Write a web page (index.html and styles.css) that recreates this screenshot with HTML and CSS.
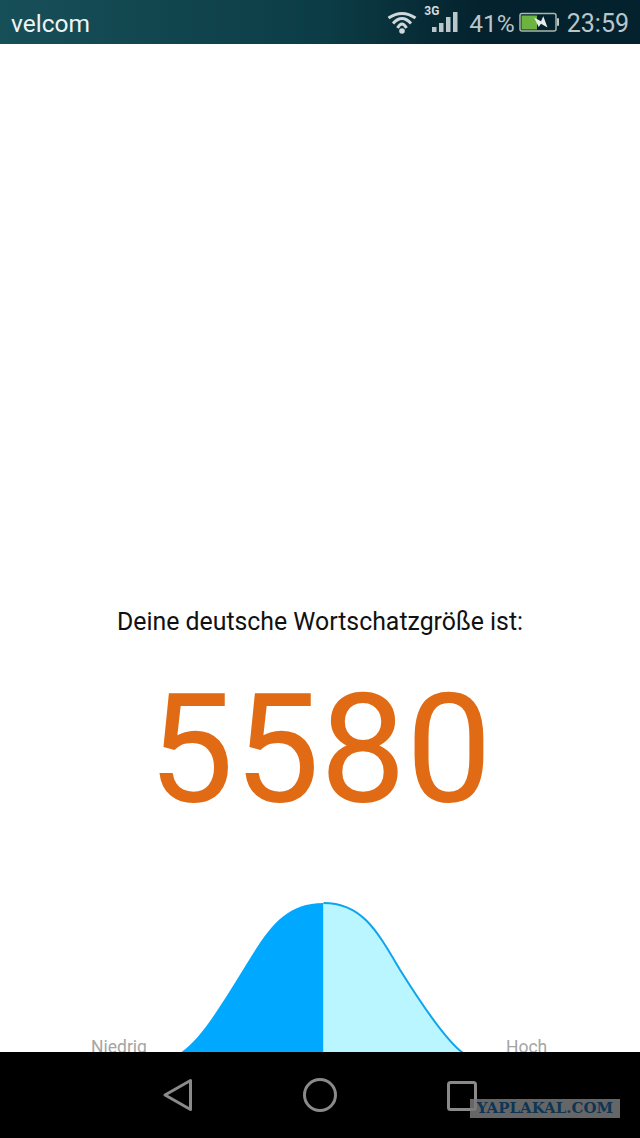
FILE: index.html
```html
<!DOCTYPE html>
<html lang="en">
<head>
    <meta charset="UTF-8">
    <meta name="viewport" content="width=device-width, initial-scale=1.0">
    <title>Wortschatz</title>
    <link rel="stylesheet" href="styles.css">
</head>
<body>
    <div class="phone">
        <div class="status-bar">
            <span class="carrier">velcom</span>
            <div class="status-icons">
                <svg class="wifi" width="30" height="24" viewBox="0 0 30 24">
                    <path d="M1.5 8Q15 -1 28.5 8" />
                    <path d="M6 13.5Q15 3.5 24 13.5" />
                    <path d="M10.5 18Q15 10 19.5 18" />
                    <circle cx="15" cy="21" r="2.8" />
                </svg>
                <div class="signal">
                    <span class="net-type">3G</span>
                    <svg width="27" height="24" viewBox="0 0 27 24">
                        <rect x="0" y="17" width="4.5" height="5" />
                        <rect x="7" y="13" width="4.5" height="9" />
                        <rect x="14" y="7" width="4.5" height="15" />
                        <rect x="21" y="2" width="4.5" height="20" />
                    </svg>
                </div>
                <span class="percent">41%</span>
                <svg class="battery" width="40" height="20" viewBox="0 0 40 20">
                    <rect class="battery-shell" x="1" y="1.5" width="36" height="17.5" rx="2" />
                    <rect class="battery-cap" x="38" y="6" width="2" height="8" rx="1" />
                    <rect class="battery-level" x="2.5" y="3.5" width="15.5" height="14" />
                    <path class="battery-bolt" d="M15 5.5L22 9.3L24.3 4.3L28.5 15.5L22 11.7L19.7 15Z" />
                </svg>
                <span class="clock">23:59</span>
            </div>
        </div>

        <main class="content">
            <p class="result-label">Deine deutsche Wortschatzgröße ist:</p>
            <p class="result-number">5580</p>
            <div class="chart">
                <span class="chart-label chart-label-low">Niedrig</span>
                <svg class="curve" width="300" height="152" viewBox="0 0 300 152">
                    <path class="curve-low" d="M3 153C24 140 46.5 101 66.5 69C90.5 30 106.5 3 146.5 3V153Z" />
                    <path class="curve-high" d="M146.5 3C184.5 3 199.5 30 222.5 69C242.5 101 268 140 286 153H146.5Z" />
                    <path class="curve-line" d="M146.5 3C184.5 3 199.5 30 222.5 69C242.5 101 268 140 286 153" />
                </svg>
                <span class="chart-label chart-label-high">Hoch</span>
            </div>
        </main>

        <div class="nav-bar">
            <svg width="32" height="34" viewBox="0 0 32 34">
                <path d="M29.5 2.5V31.5L4 17Z" />
            </svg>
            <svg width="34" height="34" viewBox="0 0 34 34">
                <circle cx="17" cy="17" r="15.5" />
            </svg>
            <svg width="32" height="32" viewBox="0 0 32 32">
                <rect x="1.5" y="3.5" width="27" height="27" rx="2" />
            </svg>
            <span class="watermark">YAPLAKAL.COM</span>
        </div>
    </div>
</body>
</html>
```

FILE: styles.css
```css
body {
    margin: 0;
    padding: 0;
    font-family: 'Roboto', sans-serif;
    background: #fff;
}

.phone {
    display: flex;
    flex-direction: column;
    width: 640px;
    height: 1138px;
    overflow: hidden;
}

.status-bar {
    flex: 0 0 44px;
    display: flex;
    align-items: center;
    justify-content: space-between;
    padding: 0 11px;
    box-sizing: border-box;
    background: linear-gradient(90deg, #174f58 0%, #0c3d46 50%, #04222e 75%, #04222e 100%);
    color: #b9c6ca;
}

.carrier {
    padding-top: 3px;
    font-size: 24.5px;
    color: #eef4f4;
}

.status-icons {
    display: flex;
    align-items: center;
}

.wifi {
    margin-right: 15px;
}

.wifi path {
    fill: none;
    stroke: #cfd8da;
    stroke-width: 3;
}

.wifi circle {
    fill: #cfd8da;
}

.signal {
    position: relative;
    display: flex;
    margin-right: 10px;
}

.signal svg {
    fill: #b9c6ca;
}

.net-type {
    position: absolute;
    left: -8px;
    top: -4px;
    font-size: 12px;
    line-height: 11px;
    font-weight: 700;
    color: #d5dcde;
}

.percent {
    padding-top: 2px;
    font-size: 24.5px;
    margin-right: 4px;
}

.battery {
    margin-right: 8px;
}

.battery-shell {
    fill: #04222e;
    stroke: #a9b8a8;
    stroke-width: 1.5;
}

.battery-cap {
    fill: #b9c6ca;
}

.battery-level {
    fill: #6cb33f;
}

.battery-bolt {
    fill: #e6ecec;
}

.clock {
    padding-top: 2px;
    font-size: 25px;
}

.content {
    flex: 1;
    display: flex;
    flex-direction: column;
    align-items: center;
    min-height: 0;
    overflow: hidden;
    padding-top: 562px;
}

.result-label {
    margin: 0;
    font-size: 24.85px;
    line-height: 32px;
    color: #111;
}

.result-number {
    margin: 28px 0 0;
    font-size: 153px;
    line-height: 168px;
    color: #e06b14;
}

.chart {
    flex: none;
    display: grid;
    grid-template-columns: 177px 300px 1fr;
    align-items: end;
    width: 100%;
    margin-top: 66px;
    height: 152px;
}

.chart-label {
    font-size: 17.5px;
    line-height: 20px;
    margin-bottom: -5px;
    color: #a5a5a5;
}

.chart-label-low {
    padding-left: 91px;
}

.chart-label-high {
    padding-left: 29px;
}

.curve {
    display: block;
}

.curve-low {
    fill: #00a8ff;
}

.curve-high {
    fill: #b9f6ff;
}

.curve-line {
    fill: none;
    stroke: #0fa4ec;
    stroke-width: 2;
}

.nav-bar {
    position: relative;
    flex: 0 0 86px;
    display: flex;
    align-items: center;
    justify-content: center;
    gap: 110px;
    background: #000;
}

.nav-bar path,
.nav-bar circle,
.nav-bar rect {
    fill: none;
    stroke: #8a8a8a;
    stroke-width: 3;
    stroke-linejoin: round;
}

.watermark {
    position: absolute;
    right: 20px;
    top: 47px;
    width: 150px;
    height: 19px;
    background: rgba(120, 120, 120, 0.85);
    color: #0e3554;
    font-family: 'DejaVu Serif', serif;
    font-size: 15px;
    font-weight: 700;
    line-height: 19px;
    text-align: center;
}
```
